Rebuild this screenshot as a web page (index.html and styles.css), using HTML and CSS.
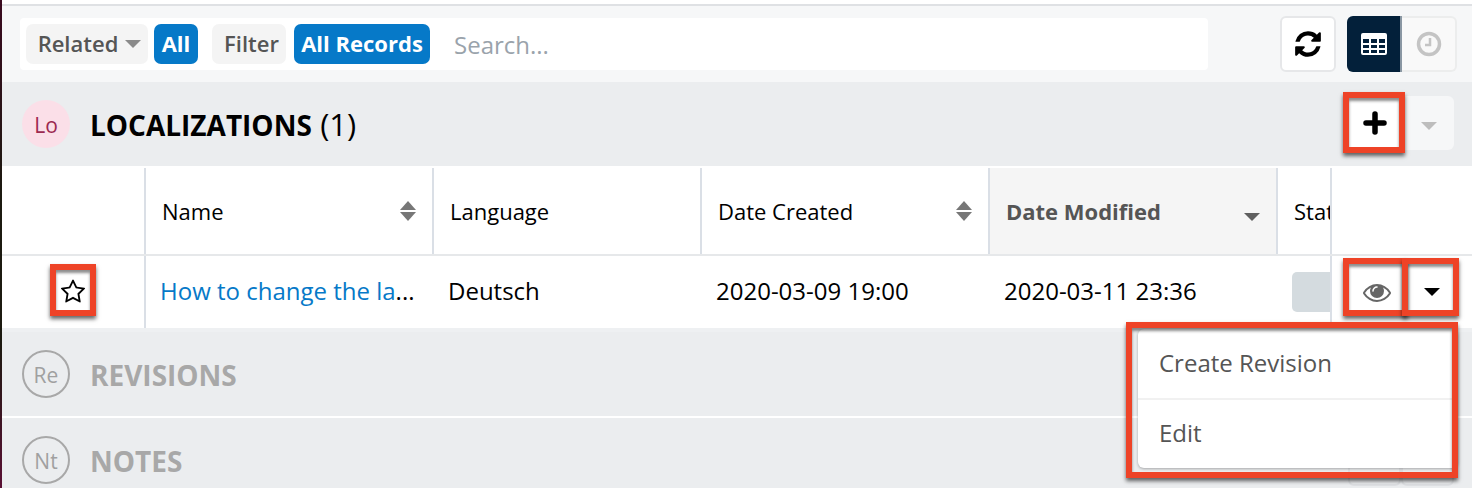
FILE: index.html
```html
<!DOCTYPE html>
<html lang="en">
<head>
  <meta charset="UTF-8" />
  <title>Localizations</title>
  <link rel="stylesheet" href="styles.css">
</head>
<body>
  <div class="page">
    <div class="toolbar">
      <div class="search-bar">
        <span class="chip related">Related <i class="caret grey"></i></span>
        <span class="chip blue all">All</span>
        <span class="chip filter">Filter</span>
        <span class="chip blue records">All Records</span>
        <span class="search-text">Search...</span>
      </div>
      <button class="tool-btn refresh">
        <svg width="30" height="30" viewBox="0 0 1792 1792"><path d="M1639 1056q0 5-1 7-64 268-268 434.5t-478 166.5q-146 0-282.5-55t-243.5-157l-129 129q-19 19-45 19t-45-19-19-45v-448q0-26 19-45t45-19h448q26 0 45 19t19 45-19 45l-137 137q71 66 161 102t187 36q134 0 250-65t186-179q11-17 53-117 8-23 30-23h192q13 0 22.5 9.5t9.5 22.5zm25-800v448q0 26-19 45t-45 19h-448q-26 0-45-19t-19-45 19-45l138-138q-148-137-349-137-134 0-250 65t-186 179q-11 17-53 117-8 23-30 23h-199q-13 0-22.5-9.5t-9.5-22.5v-7q65-268 270-434.5t480-166.5q146 0 284 55.5t245 156.5l130-129q19-19 45-19t45 19 19 45z"/></svg>
      </button>
      <div class="view-switch">
        <span class="view active">
          <svg width="26" height="22" viewBox="0 0 26 22"><path fill="#fff" fill-rule="evenodd" d="M2 0h22a2 2 0 0 1 2 2v18a2 2 0 0 1-2 2H2a2 2 0 0 1-2-2V2a2 2 0 0 1 2-2zM2 6v4h6V6zm8 0v4h6V6zm8 0v4h6V6zM2 12v3h6v-3zm8 0v3h6v-3zm8 0v3h6v-3zM2 17v3h6v-3zm8 0v3h6v-3zm8 0v3h6v-3z"/></svg>
        </span>
        <span class="view">
          <svg width="26" height="26" viewBox="0 0 26 26"><circle cx="13" cy="13" r="10.5" fill="none" stroke="#c4c4c4" stroke-width="3.5"/><path d="M14 7v7H9" fill="none" stroke="#c4c4c4" stroke-width="2.5"/></svg>
        </span>
      </div>
    </div>

    <div class="section-head">
      <span class="badge pink">Lo</span>
      <h2 class="section-title">LOCALIZATIONS <span class="count">(1)</span></h2>
      <div class="head-actions">
        <span class="head-btn">
          <svg width="26" height="26" viewBox="0 0 26 26"><path d="M13 4v18M4 13h18" stroke="#000" stroke-width="5.5" stroke-linecap="round"/></svg>
        </span>
        <span class="head-btn faded"><i class="caret light"></i></span>
      </div>
    </div>

    <div class="table">
      <div class="row head">
        <div class="cell star-col"></div>
        <div class="cell name-col">Name <span class="sort"></span></div>
        <div class="cell lang-col">Language</div>
        <div class="cell created-col">Date Created <span class="sort"></span></div>
        <div class="cell modified-col sorted">Date Modified <i class="caret dark"></i></div>
        <div class="cell status-col"><span class="clip">Status</span></div>
        <div class="cell actions-col"></div>
      </div>
      <div class="row body">
        <div class="cell star-col">
          <svg width="26" height="26" viewBox="0 0 1792 1792"><path d="M1201 1004l306-297-422-62-189-382-189 382-422 62 306 297-73 421 378-199 377 199zm527-357q0 22-26 48l-363 354 86 500q1 7 1 20 0 50-41 50-19 0-40-12l-449-236-449 236q-22 12-40 12-21 0-31.5-14.5t-10.5-35.5q0-6 2-20l86-500-364-354q-25-27-25-48 0-37 56-46l502-73 225-455q19-41 49-41t49 41l225 455 502 73q56 9 56 46z"/></svg>
        </div>
        <div class="cell name-col"><a class="link">How to change the la</a>...</div>
        <div class="cell lang-col">Deutsch</div>
        <div class="cell created-col">2020-03-09 19:00</div>
        <div class="cell modified-col">2020-03-11 23:36</div>
        <div class="cell status-col"><span class="status-chip"></span></div>
        <div class="cell actions-col">
          <svg class="eye" width="28" height="28" viewBox="0 0 1792 1792"><path d="M1664 960q-152-236-381-353 61 104 61 225 0 185-131.5 316.5t-316.5 131.5-316.5-131.5-131.5-316.5q0-121 61-225-229 117-381 353 133 205 333.5 326.5t434.5 121.5 434.5-121.5 333.5-326.5zm-720-384q0-20-14-34t-34-14q-125 0-214.5 89.5t-89.5 214.5q0 20 14 34t34 14 34-14 14-34q0-86 61-147t147-61q20 0 34-14t14-34zm848 384q0 34-20 69-140 230-376.5 368.5t-499.5 138.5-499.5-139-376.5-368q-20-35-20-69t20-69q140-229 376.5-368t499.5-139 499.5 139 376.5 368q20 35 20 69z"/></svg>
          <i class="caret black"></i>
        </div>
      </div>
    </div>

    <div class="section-head closed">
      <span class="badge outline">Re</span>
      <h2 class="section-title">REVISIONS</h2>
      <div class="head-actions ghost">
        <span class="head-btn"></span>
        <span class="head-btn"></span>
      </div>
    </div>
    <div class="section-head closed last">
      <span class="badge outline">Nt</span>
      <h2 class="section-title">NOTES</h2>
      <div class="head-actions ghost">
        <span class="head-btn"></span>
        <span class="head-btn"></span>
      </div>
    </div>

    <div class="menu">
      <div class="menu-item">Create Revision</div>
      <div class="menu-item">Edit</div>
    </div>

    <!-- red callouts drawn on top of the screenshot -->
    <div class="callout c-plus"></div>
    <div class="callout c-star"></div>
    <div class="callout c-eye"></div>
    <div class="callout c-caret"></div>
    <div class="callout c-menu"></div>
  </div>
</body>
</html>
```

FILE: styles.css
```css
* {
  box-sizing: border-box;
}

body {
  margin: 0;
  background: #fff;
  font-family: 'Open Sans', sans-serif;
  overflow: hidden;
}

.page {
  position: relative;
  width: 1474px;
  height: 488px;
  overflow: hidden;
  padding: 4px 2px 0;
  background: #fff;
}

.page::before {
  content: '';
  position: absolute;
  left: 0;
  top: 0;
  bottom: 0;
  width: 2px;
  background: linear-gradient(to bottom, #3a0a20, #1c1a10 40%, #1c1a10 70%, #5a1034);
}

.toolbar {
  display: flex;
  align-items: center;
  height: 78px;
  padding-left: 18px;
  border-top: 2px solid #dfe1e4;
  background: #f6f7f8;
}

.search-bar {
  display: flex;
  align-items: center;
  width: 1188px;
  height: 52px;
  padding-left: 6px;
  border-radius: 4px;
  background: #fff;
}

.chip {
  display: flex;
  align-items: center;
  justify-content: center;
  height: 40px;
  padding-bottom: 2px;
  border-radius: 7px;
  background: #f4f4f4;
  color: #555;
  font-size: 22px;
  font-weight: 600;
}

.chip.blue {
  background: #0679c8;
  color: #fff;
  font-weight: 700;
}

.related {
  width: 122px;
  gap: 7px;
  padding-left: 5px;
}

.all {
  width: 44px;
  margin-left: 6px;
}

.filter {
  width: 74px;
  margin-left: 14px;
  padding-left: 5px;
}

.records {
  width: 136px;
  margin-left: 8px;
}

.search-text {
  margin-left: 24px;
  color: #9aa3ab;
  font-size: 24px;
}

.caret {
  display: inline-block;
  width: 0;
  height: 0;
  border-style: solid;
  border-color: transparent;
  border-width: 8px 8px 0;
}

.caret.grey {
  margin-top: 2px;
  border-top-color: #8a8a8a;
}

.caret.light {
  border-top-color: #bdbdbd;
}

.caret.dark {
  border-top-color: #5f5f5f;
}

.caret.black {
  border-top-color: #000;
}

.tool-btn {
  display: flex;
  align-items: center;
  justify-content: center;
  width: 56px;
  height: 56px;
  margin-left: 72px;
  padding: 0;
  border: 2px solid #e6e7e9;
  border-radius: 6px;
  background: #fff;
}

.view-switch {
  display: flex;
  height: 56px;
  margin-left: 11px;
}

.view {
  display: flex;
  align-items: center;
  justify-content: center;
  width: 55px;
  border: 2px solid #eceded;
  border-left: none;
  border-radius: 0 6px 6px 0;
  background: #f9f9f9;
}

.view.active {
  border: none;
  border-right: 2px solid #8a97a3;
  border-radius: 6px 0 0 6px;
  background: #03203a;
}

.section-head {
  position: relative;
  display: flex;
  align-items: center;
  height: 84px;
  padding-left: 20px;
  background: #ebedef;
}

.badge {
  display: flex;
  align-items: center;
  justify-content: center;
  width: 48px;
  height: 48px;
  padding-top: 2px;
  border-radius: 50%;
  font-size: 21px;
}

.badge.pink {
  background: #fbdfe8;
  color: #9c2a50;
}

.badge.outline {
  border: 2px solid #a8a8a8;
  color: #a0a0a0;
}

.section-title {
  margin: 2px 0 0 20px;
  color: #000;
  font-size: 28px;
  font-weight: 700;
}

.count {
  margin-left: 1px;
  font-size: 31px;
  font-weight: 400;
  line-height: 1;
}

.closed .section-title {
  color: #a8a8a8;
}

.head-actions {
  position: absolute;
  top: 14px;
  left: 1346px;
  display: flex;
}

.head-btn {
  display: flex;
  align-items: center;
  justify-content: center;
  width: 53px;
  height: 54px;
  background: #fff;
}

.head-btn.faded {
  padding: 5px 0 0 3px;
  border-radius: 0 6px 6px 0;
  background: #f6f7f8;
}

.ghost .head-btn {
  border: 2px solid #dfe1e4;
  border-radius: 6px;
  background: transparent;
}

.table {
  height: 166px;
  padding-top: 2px;
  border-bottom: 4px solid #eef0f2;
  background: #fff;
}

.row {
  display: grid;
  grid-template-columns: 144px 288px 268px 288px 288px 54px 140px;
}

.row.head {
  height: 88px;
  border-bottom: 2px solid #e6e8ea;
}

.row.body {
  height: 72px;
}

.cell {
  display: flex;
  align-items: center;
  overflow: hidden;
  color: #000;
  white-space: nowrap;
}

.head .cell {
  padding-left: 16px;
  border-right: 2px solid #dadfe6;
  font-size: 22px;
}

.body .cell {
  padding: 0 0 4px 14px;
  font-size: 24px;
}

.body .cell.star-col {
  justify-content: center;
  padding: 0;
  border-right: 2px solid #dadfe6;
}

.head .cell.actions-col {
  border-right: none;
}

.body .cell.status-col {
  padding-bottom: 0;
}

.body .cell.actions-col {
  gap: 33px;
  margin-left: -2px;
  padding: 0 0 0 31px;
  border-left: 2px solid #dadfe6;
}

.eye {
  fill: #666;
}

.clip {
  display: block;
  width: 37px;
  overflow: hidden;
}

.sort {
  position: relative;
  width: 16px;
  height: 20px;
  margin-left: auto;
  margin-right: 16px;
}

.sort::before,
.sort::after {
  content: '';
  position: absolute;
  left: 0;
  border-style: solid;
  border-color: transparent;
  border-width: 0 8px 9px;
  border-bottom-color: #777;
}

.sort::before {
  top: 0;
}

.sort::after {
  bottom: 0;
  border-width: 9px 8px 0;
  border-top-color: #777;
}

.modified-col.sorted {
  background: #f5f5f5;
  color: #555;
  font-weight: 700;
}

.sorted .caret {
  margin-left: auto;
  margin-top: 12px;
  margin-right: 16px;
}

.link {
  color: #0679c8;
}

.status-chip {
  display: block;
  width: 60px;
  height: 40px;
  border-radius: 5px 0 0 5px;
  background: #d4dbdf;
}

.closed {
  height: 86px;
  border-bottom: 2px solid #fff;
}

.menu {
  position: absolute;
  left: 1138px;
  top: 329px;
  width: 320px;
  height: 139px;
  border-radius: 6px;
  background: #fff;
  box-shadow: 0 1px 3px rgba(0, 0, 0, 0.3);
  color: #555;
  font-size: 24px;
}

.menu-item {
  display: flex;
  align-items: center;
  height: 69px;
  padding: 0 0 2px 21px;
}

.menu-item + .menu-item {
  height: 70px;
  padding-bottom: 4px;
  border-top: 2px solid #f1f1f1;
}

.callout {
  position: absolute;
  border: 6px solid #ee4327;
  box-shadow: 0 3px 4px rgba(0, 0, 0, 0.6), inset 0 3px 3px rgba(0, 0, 0, 0.45);
}

.c-plus {
  left: 1343px;
  top: 92px;
  width: 62px;
  height: 61px;
}

.c-star {
  left: 50px;
  top: 264px;
  width: 46px;
  height: 52px;
}

.c-eye {
  left: 1343px;
  top: 258px;
  width: 65px;
  height: 58px;
}

.c-caret {
  left: 1402px;
  top: 258px;
  width: 57px;
  height: 58px;
}

.c-menu {
  left: 1126px;
  top: 322px;
  width: 332px;
  height: 156px;
}
```
